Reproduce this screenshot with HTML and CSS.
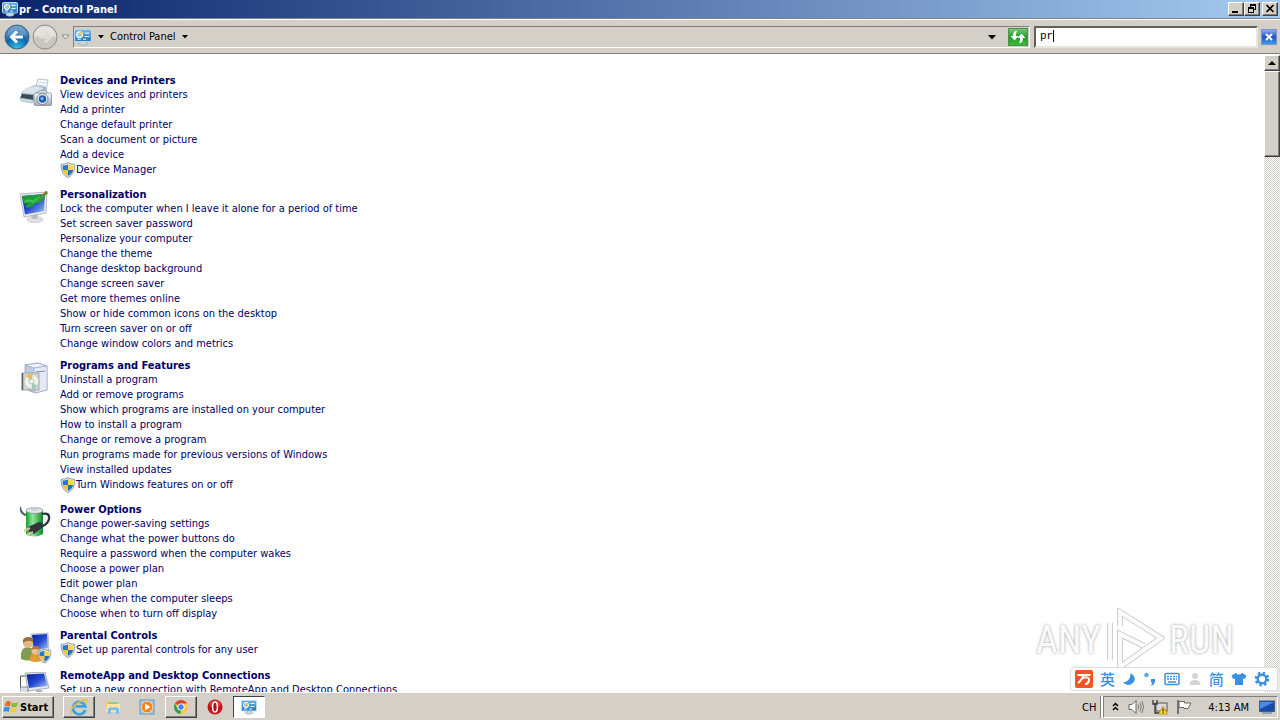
FILE: index.html
```html
<!DOCTYPE html>
<html lang="en">
  <head>
    <meta charset="UTF-8" />
    <meta name="viewport" content="width=device-width, initial-scale=1.0" />
    <title>pr - Control Panel</title>
    <link rel="stylesheet" href="styles.css">
  </head>
  <body>
    <!-- shared icons -->
    <svg class="defs" width="0" height="0">
      <defs>
        <linearGradient id="screen" x1="0" y1="0" x2="1" y2="1">
          <stop offset="0" stop-color="#0a1f9c" /><stop offset=".5" stop-color="#2448cf" /><stop offset="1" stop-color="#a9c8f5" />
        </linearGradient>
        <linearGradient id="cpblue" x1="0" y1="0" x2="0" y2="1">
          <stop offset="0" stop-color="#67b5e6" /><stop offset="1" stop-color="#2277b8" />
        </linearGradient>
        <linearGradient id="silver" x1="0" y1="0" x2="0" y2="1">
          <stop offset="0" stop-color="#f7f8fa" /><stop offset="1" stop-color="#a4abb5" />
        </linearGradient>
        <linearGradient id="battery" x1="0" y1="0" x2="1" y2="0">
          <stop offset="0" stop-color="#1d9a35" /><stop offset=".4" stop-color="#8ee99a" /><stop offset="1" stop-color="#138327" />
        </linearGradient>
        <radialGradient id="orb" cx=".5" cy="1" r="1">
          <stop offset="0" stop-color="#35c5ee" /><stop offset=".5" stop-color="#1266ad" /><stop offset="1" stop-color="#5c92c5" />
        </radialGradient>
      </defs>
      <symbol id="shield" viewBox="0 0 16 16">
        <path d="M8 0.5C6 2 3.500 2.300 1.300 2.200C0.800 8 2.500 13 8 15.600C13.500 13 15.200 8 14.700 2.200C12.500 2.300 10 2 8 0.500Z" fill="#dfe3e8" stroke="#7d8b9b" stroke-width=".8" />
        <path d="M8 2.200C6.500 3.200 4.800 3.600 2.700 3.600L2.700 8H8Z" fill="#2777ce" />
        <path d="M8 2.200C9.500 3.200 11.200 3.600 13.300 3.600L13.300 8H8Z" fill="#fbd743" />
        <path d="M2.800 8H8V14C5 12.500 3.300 10.500 2.800 8Z" fill="#f5c52c" />
        <path d="M13.200 8H8V14C11 12.500 12.700 10.500 13.200 8Z" fill="#256fc6" />
      </symbol>
      <symbol id="panel" viewBox="0 0 16 16">
        <ellipse cx="8" cy="13.500" rx="4" ry="1.800" fill="#cdd4db" stroke="#8f9da8" stroke-width=".5" />
        <rect x=".5" y="1.500" width="15" height="10.500" rx="1" fill="url(#cpblue)" stroke="#b5dcf2" />
        <circle cx="5" cy="6" r="2.600" fill="#8ec9ec" stroke="#fff" />
        <path d="M5 6V3.400A2.600 2.600 0 0 1 7.600 6Z" fill="#f5c451" />
        <path d="M9.500 4.500H13.500M9.500 7.500H13.500M3 10H6M8 10H11" stroke="#e6f5ff" />
      </symbol>
    </svg>

    <header class="titlebar">
      <svg class="icon16"><use href="#panel" /></svg>
      <h1 class="title">pr - Control Panel</h1>
      <div class="winbtns">
        <button class="winbtn" type="button" aria-label="Minimize">
          <svg width="12" height="10"><path d="M2 7H8V9H2Z" /></svg>
        </button>
        <button class="winbtn" type="button" aria-label="Restore">
          <svg width="12" height="10"><path d="M4 0H10V6H8V5H9V2H5V3H4ZM2 3H8V9H2ZM3 5V8H7V5Z" fill-rule="evenodd" /></svg>
        </button>
        <button class="winbtn close" type="button" aria-label="Close">
          <svg width="12" height="10"><path d="M2.500 1L9.500 8M9.500 1L2.500 8" stroke="#000" stroke-width="1.700" /></svg>
        </button>
      </div>
    </header>

    <nav class="navbar">
      <button class="orb" type="button" aria-label="Back">
        <svg width="26" height="26" viewBox="0 0 26 26">
          <circle cx="13" cy="13" r="12" fill="url(#orb)" stroke="#416586" />
          <path d="M3 12A10 10 0 0 1 23 12Q13 9 3 12Z" fill="#fff" opacity=".22" />
          <path d="M19 13H8M13 7.500L7.500 13L13 18.500" fill="none" stroke="#fff" stroke-width="3" />
        </svg>
      </button>
      <button class="orb" type="button" aria-label="Forward">
        <svg width="26" height="26" viewBox="0 0 26 26">
          <circle cx="13" cy="13" r="12" fill="#cac7c1" stroke="#8e8e8e" />
          <path d="M2 13A11 11 0 0 1 24 13Q13 10 2 13Z" fill="#e5e3df" />
          <path d="M7 13H18M13 7.500L18.500 13L13 18.500" fill="none" stroke="#dedbd6" stroke-width="3" />
        </svg>
      </button>
      <button class="recent" type="button" aria-label="Recent pages">
        <svg width="9" height="6"><path d="M1 1H8L4.500 5Z" fill="#f3f3f3" stroke="#888" /></svg>
      </button>
      <div class="address">
        <svg class="icon18"><use href="#panel" /></svg>
        <svg class="arrow" width="6" height="4"><path d="M0 0H6L3 3.500Z" /></svg>
        <a class="crumb" href="#">Control Panel</a>
        <svg class="arrow" width="6" height="4"><path d="M0 0H6L3 3.500Z" /></svg>
        <button class="drop" type="button" aria-label="Previous locations">
          <svg width="8" height="5"><path d="M0 0H8L4 4.500Z" /></svg>
        </button>
        <button class="refresh" type="button" aria-label="Refresh">
          <svg width="18" height="18" viewBox="0 0 18 18">
            <path d="M8 3C5 3 4 5 4 8H1.500L5.500 12.500L9.500 8H7C7 6 7 4.500 8 3ZM10 15C13 15 14 13 14 10H16.500L12.500 5.500L8.500 10H11C11 12 11 13.500 10 15Z" fill="#fff" />
          </svg>
        </button>
      </div>
      <div class="search">
        <input class="searchbox" type="text" value="pr" aria-label="Search Control Panel">
        <span class="caret"></span>
      </div>
      <button class="clear" type="button" aria-label="Clear search">
        <svg width="8" height="8"><path d="M1 1L7 7M7 1L1 7" stroke="#fff" stroke-width="2" /></svg>
      </button>
    </nav>

    <div class="view">
      <main class="results">
        <section class="group">
          <svg class="icon32" viewBox="0 0 32 32">
            <path d="M15 12L18 2L28 3L26 14Z" fill="#f4f8fc" stroke="#9ab" stroke-width=".7" />
            <path d="M19 5L26 6M18 8L25 9" stroke="#cbdcea" />
            <path d="M5 12L15 8L26 10L28 17L14 24L1 20V16Z" fill="#a6b4c2" />
            <path d="M5 12L15 9L24 11L13 17L2 16Z" fill="#dce4eb" />
            <path d="M2 17L13 18V23L0 21Z" fill="#3c4a58" />
            <path d="M0 21L13 23L12 26L1 24Z" fill="#c9dfec" stroke="#899" stroke-width=".5" />
            <rect x="14" y="16" width="17.500" height="12.500" rx="1.500" fill="url(#silver)" stroke="#7a8490" stroke-width=".7" />
            <path d="M18 16L19 13.500H26L27 16Z" fill="#d5dbe1" stroke="#8a949e" stroke-width=".5" />
            <circle cx="22.500" cy="22" r="5.500" fill="#e9eef4" stroke="#667" stroke-width=".7" />
            <circle cx="22.500" cy="22" r="3.800" fill="#245cb4" />
            <circle cx="22" cy="21.500" r="1.500" fill="#7fc1ff" />
          </svg>
          <div class="tasks">
            <h2><a href="#">Devices and Printers</a></h2>
            <ul>
              <li><a href="#">View devices and printers</a></li>
              <li><a href="#">Add a printer</a></li>
              <li><a href="#">Change default printer</a></li>
              <li><a href="#">Scan a document or picture</a></li>
              <li><a href="#">Add a device</a></li>
              <li class="admin"><svg class="icon16"><use href="#shield" /></svg><a href="#">Device Manager</a></li>
            </ul>
          </div>
        </section>

        <section class="group">
          <svg class="icon32" viewBox="0 0 32 32">
            <ellipse cx="15" cy="28.500" rx="8" ry="3" fill="#dfe1e4" stroke="#b5b8bc" stroke-width=".6" />
            <path d="M11 23H18L17 28H12Z" fill="#b9bec5" />
            <path d="M0 3L27 1L26 22L4 26Z" fill="#e8ebee" stroke="#9aa3ad" stroke-width=".7" />
            <path d="M2 5L25 3L24 20L5 23.500Z" fill="url(#screen)" />
            <path d="M2 5L25 3L24.500 8Q20 12 16 12Q14 16 7 17L5 15L9 12L4 13Z" fill="#1f9a3c" />
            <path d="M5 11Q9 8 13 11L20 6" fill="none" stroke="#35c54a" stroke-width="2.500" />
            <path d="M15 11L26 0L28 2L18 12Z" fill="#3a9b38" />
            <path d="M22 5L27 0" stroke="#b76c35" stroke-width="1.500" />
          </svg>
          <div class="tasks">
            <h2><a href="#">Personalization</a></h2>
            <ul>
              <li><a href="#">Lock the computer when I leave it alone for a period of time</a></li>
              <li><a href="#">Set screen saver password</a></li>
              <li><a href="#">Personalize your computer</a></li>
              <li><a href="#">Change the theme</a></li>
              <li><a href="#">Change desktop background</a></li>
              <li><a href="#">Change screen saver</a></li>
              <li><a href="#">Get more themes online</a></li>
              <li><a href="#">Show or hide common icons on the desktop</a></li>
              <li><a href="#">Turn screen saver on or off</a></li>
              <li><a href="#">Change window colors and metrics</a></li>
            </ul>
          </div>
        </section>

        <section class="group">
          <svg class="icon32" viewBox="0 0 32 32">
            <path d="M5 3L18 1L27 4V28L15 31L5 27Z" fill="#c3cbe4" stroke="#8c95b8" stroke-width=".7" />
            <path d="M5 3L18 1L27 4L14 6Z" fill="#edf1fb" stroke="#8c95b8" stroke-width=".6" />
            <path d="M14 6L27 4V28L15 31Z" fill="#e5e9f5" stroke="#9da5c1" stroke-width=".6" />
            <path d="M16 10L25 9" stroke="#7187c7" />
            <rect x="2" y="11" width="17" height="17" fill="#d5d8d3" stroke="#8b9090" stroke-width=".7" />
            <circle cx="11.500" cy="19.500" r="7.500" fill="#edf0e8" stroke="#a4aaa4" stroke-width=".6" />
            <path d="M11.500 19.500L6 14A7.500 7.500 0 0 1 13 12Z" fill="#e3bd67" />
            <path d="M11.500 19.500L17 24A7.500 7.500 0 0 1 12 27Z" fill="#9fc9b5" />
            <circle cx="11.500" cy="19.500" r="2.200" fill="#fff" stroke="#999" stroke-width=".6" />
            <path d="M2.500 11V28" stroke="#5d625e" stroke-width="1.500" />
          </svg>
          <div class="tasks">
            <h2><a href="#">Programs and Features</a></h2>
            <ul>
              <li><a href="#">Uninstall a program</a></li>
              <li><a href="#">Add or remove programs</a></li>
              <li><a href="#">Show which programs are installed on your computer</a></li>
              <li><a href="#">How to install a program</a></li>
              <li><a href="#">Change or remove a program</a></li>
              <li><a href="#">Run programs made for previous versions of Windows</a></li>
              <li><a href="#">View installed updates</a></li>
              <li class="admin"><svg class="icon16"><use href="#shield" /></svg><a href="#">Turn Windows features on or off</a></li>
            </ul>
          </div>
        </section>

        <section class="group">
          <svg class="icon32" viewBox="0 0 32 32">
            <path d="M0 1Q1 8 6 9" fill="none" stroke="#4b5c77" stroke-width="2" />
            <path d="M6 4V28Q14 33 23 28V4Z" fill="url(#battery)" />
            <ellipse cx="14.500" cy="4.500" rx="8.500" ry="3" fill="#dfe4e8" stroke="#7e8d88" stroke-width=".7" />
            <path d="M11 4V1.500Q14.500 0 18 1.500V4Q14.500 5.500 11 4Z" fill="#c4cbd2" />
            <path d="M22 8Q30 6 29 13Q28 18 21 21" fill="none" stroke="#29323c" stroke-width="2.300" />
            <path d="M8 21L19 16Q24 16 23 21L14 28Q8 27 8 21Z" fill="#30363c" />
            <path d="M10 22L4 25M13 26L7 29" stroke="#d8c397" stroke-width="2" />
          </svg>
          <div class="tasks">
            <h2><a href="#">Power Options</a></h2>
            <ul>
              <li><a href="#">Change power-saving settings</a></li>
              <li><a href="#">Change what the power buttons do</a></li>
              <li><a href="#">Require a password when the computer wakes</a></li>
              <li><a href="#">Choose a power plan</a></li>
              <li><a href="#">Edit power plan</a></li>
              <li><a href="#">Change when the computer sleeps</a></li>
              <li><a href="#">Choose when to turn off display</a></li>
            </ul>
          </div>
        </section>

        <section class="group">
          <svg class="icon32" viewBox="0 0 32 32">
            <path d="M11 2L28 1L29 18L13 20Z" fill="#dbe3ec" stroke="#99a" stroke-width=".6" />
            <path d="M12 3L27 2L28 16L14 18Z" fill="url(#screen)" />
            <path d="M1 27Q0 15 8 15Q15 15 15 27Q8 30 1 27Z" fill="#809c54" />
            <circle cx="8" cy="11" r="5" fill="#e4ba83" />
            <path d="M3 11Q2 5 8 5Q14 5 13 10Q8 7 3 11Z" fill="#96703b" />
            <path d="M10 29Q9 21 16 21Q22 21 21 29Q16 31 10 29Z" fill="#e39c31" />
            <circle cx="15.500" cy="18.500" r="4" fill="#edc28e" />
            <path d="M11.500 18Q12 14 15.500 14Q20 14 19.500 18Q15 16 11.500 18Z" fill="#b87a35" />
            <svg x="17" y="16" width="15" height="16"><use href="#shield" /></svg>
          </svg>
          <div class="tasks">
            <h2><a href="#">Parental Controls</a></h2>
            <ul>
              <li class="admin"><svg class="icon16"><use href="#shield" /></svg><a href="#">Set up parental controls for any user</a></li>
            </ul>
          </div>
        </section>

        <section class="group">
          <svg class="icon32" viewBox="0 0 32 32">
            <path d="M.5 4H6M.5 4V16H6" fill="none" stroke="#555" />
            <path d="M5 1L25 0L29 16L8 19Z" fill="#e6eaf0" stroke="#8b93a0" stroke-width=".7" />
            <path d="M6.500 2.500L24 1.500L27.500 14L9 16Z" fill="url(#screen)" />
            <path d="M0 15H8V22H0Z" fill="#d8dde3" stroke="#667" stroke-width=".7" />
            <path d="M16 18H22L23 23H16Z" fill="#aeb4bc" />
          </svg>
          <div class="tasks">
            <h2><a href="#">RemoteApp and Desktop Connections</a></h2>
            <ul>
              <li><a href="#">Set up a new connection with RemoteApp and Desktop Connections</a></li>
            </ul>
          </div>
        </section>
      </main>

      <div class="scrollbar">
        <button class="scroll-up" type="button" aria-label="Scroll up">
          <svg width="8" height="4"><path d="M4 0L8 4H0Z" /></svg>
        </button>
        <div class="thumb"></div>
      </div>
    </div>

    <div class="watermark">
      <span>ANY</span>
      <svg width="60" height="64" viewBox="0 0 60 64">
        <path d="M5 15V52M15 18V4L56 30L15 59V26L39 38" fill="none" stroke="#cfcfcf" stroke-width="6" />
        <path d="M5 15V52M15 18V4L56 30L15 59V26L39 38" fill="none" stroke="#fbfbfb" stroke-width="4" />
      </svg>
      <span>RUN</span>
    </div>

    <!-- input method toolbar -->
    <div class="ime">
      <svg width="18" height="18" viewBox="0 0 18 18">
        <rect width="18" height="18" rx="2" fill="#f2571f" />
        <path d="M2.500 5H15.500M8 5Q8 9 3 13M7 8.500Q13 6 14 9Q14 14 10 14" fill="none" stroke="#fff" stroke-width="2" />
      </svg>
      <span class="han">英</span>
      <svg width="14" height="14" viewBox="0 0 14 14"><path d="M8.500 1Q9 9 1 10.500Q6 15 11 11Q15.500 6 8.500 1Z" fill="#3c8ee0" /></svg>
      <svg width="14" height="14" viewBox="0 0 14 14"><circle cx="3.500" cy="3" r="1.700" fill="#7db5ec" stroke="#3c8ee0" /><path d="M8 7H12V10Q11 13 8 14L9.500 10.500H8Z" fill="#3c8ee0" /></svg>
      <svg width="16" height="14" viewBox="0 0 16 14">
        <rect x="1" y="1.500" width="14" height="11" rx="1" fill="none" stroke="#3c8ee0" stroke-width="1.500" />
        <path d="M3 4.500H13M3 7H13" stroke="#3c8ee0" stroke-width="1.500" stroke-dasharray="2 1" /><path d="M4 10H12" stroke="#3c8ee0" stroke-width="1.500" />
      </svg>
      <svg width="14" height="14" viewBox="0 0 14 14"><circle cx="7" cy="4" r="3" fill="#d5d5d5" /><path d="M1.500 13Q1.500 8 7 8Q12.500 8 12.500 13Z" fill="#d5d5d5" /></svg>
      <span class="han">简</span>
      <svg width="16" height="14" viewBox="0 0 16 14"><path d="M5 1Q8 4 11 1L15.500 3.500L14 7L12 6.500V13H4V6.500L2 7L.5 3.500Z" fill="#3c8ee0" /></svg>
      <svg width="16" height="16" viewBox="0 0 16 16">
        <circle cx="8" cy="8" r="4.300" fill="none" stroke="#3c8ee0" stroke-width="2.400" />
        <circle cx="8" cy="8" r="6.200" fill="none" stroke="#3c8ee0" stroke-width="2.400" stroke-dasharray="2.430 2.430" />
      </svg>
    </div>

    <footer class="taskbar">
      <button class="start" type="button">
        <svg width="16" height="16" viewBox="0 0 16 16">
          <path d="M3 3Q5 1 8 3L7 7.500Q4 6 1.500 7.500Z" fill="#ed6a2a" />
          <path d="M9 3.500Q12 5 15 3L14 7.500Q11 9 8 7.500Z" fill="#83bf3b" />
          <path d="M1.300 8.500Q4 7 6.800 8.500L5.700 13Q3 11.500 .3 13Z" fill="#3a8ede" />
          <path d="M7.800 9Q11 10 13.800 8.500L12.700 13Q10 14.500 6.700 13Z" fill="#fbcb35" />
        </svg>
        Start
      </button>
      <div class="apps">
        <button class="app running" type="button" aria-label="Internet Explorer">
          <svg width="18" height="18" viewBox="0 0 16 16">
            <path d="M13.500 10.500A5.500 5.500 0 1 1 13.500 7.500H5" fill="none" stroke="#3ba4e4" stroke-width="2.500" />
            <path d="M1 14Q-1 10 6 5Q14 0 15 2Q15.500 3 14 5" fill="none" stroke="#efbd33" stroke-width="1.200" />
          </svg>
        </button>
        <button class="app" type="button" aria-label="Explorer">
          <svg width="16" height="16" viewBox="0 0 16 16">
            <path d="M1 2H6L7 4H14V13H1Z" fill="#f0cf68" />
            <path d="M3 3H13V7H3Z" fill="#8bd08d" /><path d="M2 5H15V13H1Z" fill="#f9e6a0" />
            <path d="M3 15V10Q3 8.500 5 8.500H12Q14 8.500 14 10V15H11V11H6V15Z" fill="#79bdeb" />
          </svg>
        </button>
        <button class="app" type="button" aria-label="Media Player">
          <svg width="16" height="16" viewBox="0 0 16 16">
            <rect x="1" y="1" width="14" height="14" fill="#9fcbea" stroke="#5e96c1" />
            <circle cx="8" cy="8" r="5.800" fill="#f58220" stroke="#ffd39b" /><path d="M6 4.500L11.500 8L6 11.500Z" fill="#fff" />
          </svg>
        </button>
        <button class="app running" type="button" aria-label="Chrome">
          <svg width="16" height="16" viewBox="0 0 16 16">
            <circle cx="8" cy="8" r="7" fill="#fbcc33" />
            <path d="M8 8L1.900 4.500A7 7 0 0 1 14.100 4.500H8Z" fill="#df4333" /><path d="M1.900 4.500L5 10L8 11L7.500 15A7 7 0 0 1 1.900 4.500Z" fill="#2ba24c" />
            <circle cx="8" cy="8" r="3.600" fill="#fff" /><circle cx="8" cy="8" r="2.700" fill="#4286f0" />
          </svg>
        </button>
        <button class="app" type="button" aria-label="Opera">
          <svg width="16" height="16" viewBox="0 0 16 16">
            <circle cx="8" cy="8" r="7.500" fill="#c4151c" /><ellipse cx="8" cy="5" rx="5.500" ry="3.500" fill="#ea6b68" opacity=".5" />
            <ellipse cx="8" cy="8" rx="2.400" ry="5" fill="#b01016" stroke="#fff" stroke-width="1.500" />
          </svg>
        </button>
        <button class="app active" type="button" aria-label="Control Panel">
          <svg class="icon16"><use href="#panel" /></svg>
        </button>
      </div>
      <span class="lang">CH</span>
      <div class="tray">
        <svg width="8" height="10"><path d="M1 4L3.500 1.500L6 4M1 8L3.500 5.500L6 8" fill="none" stroke="#000" stroke-width="1.500" /></svg>
        <svg width="16" height="16" viewBox="0 0 16 16">
          <path d="M1 5.500H4L8 1.500V14.500L4 10.500H1Z" fill="#fff" stroke="#666" />
          <path d="M10 5.500Q11.500 8 10 10.500M12 3.500Q14.500 8 12 12.500M14 2Q17 8 14 14" fill="none" stroke="#777" />
        </svg>
        <svg width="16" height="16" viewBox="0 0 16 16">
          <rect x="4" y="4" width="11" height="8" fill="#d8dce0" stroke="#555" />
          <path d="M1 1V5H5V1M3 5V14H8" fill="none" stroke="#333" stroke-width="1.300" />
          <path d="M11 7L15.500 15H6.500Z" fill="#ffd62e" stroke="#a98b0a" stroke-width=".7" /><path d="M11 9.500V12.500M11 13.300V14.300" stroke="#000" />
        </svg>
        <svg width="16" height="16" viewBox="0 0 16 16">
          <path d="M2 1V15" stroke="#555" stroke-width="1.500" /><path d="M3 2.500H8.500V4H15L12 9.500H8V8.500H3Z" fill="#fff" stroke="#666" />
        </svg>
        <time class="clock">4:13 AM</time>
        <svg width="16" height="16" viewBox="0 0 16 16">
          <rect x=".5" y="2" width="15" height="10.500" fill="#174ba5" stroke="#3f5d86" /><path d="M1 3H15L1 10Z" fill="#4a8ce0" /><path d="M3 14H13" stroke="#8ca3ba" stroke-width="2" />
        </svg>
      </div>
    </footer>
  </body>
</html>
```
FILE: styles.css
```css
* {
  box-sizing: border-box;
  margin: 0;
  padding: 0;
}
body {
  display: flex;
  flex-direction: column;
  height: 100vh;
  overflow: hidden;
  background-color: #fff;
  color: #000;
  font-family: Tahoma, "DejaVu Sans Condensed", "Noto Sans", sans-serif;
  font-size: 11px;
}
svg {
  display: block;
  flex: none;
}
button {
  display: flex;
  align-items: center;
  justify-content: center;
  flex: none;
  border: none;
  background: none;
  font: inherit;
}
a {
  color: inherit;
  text-decoration: none;
}
ul {
  list-style: none;
}
.defs {
  position: absolute;
}
.icon16 {
  width: 16px;
  height: 16px;
}
.icon18 {
  width: 18px;
  height: 18px;
}
.icon32 {
  width: 32px;
  height: 32px;
}

/* title bar */
.titlebar {
  display: flex;
  align-items: center;
  gap: 1px;
  flex: none;
  height: 18px;
  padding: 0 2px;
  background: linear-gradient(to right, #0a246a, #a6caf0);
  color: #fff;
}
.title {
  flex: 1;
  font-size: 11px;
}
.winbtns {
  display: flex;
}
.winbtn,
.scroll-up,
.thumb,
.start,
.running {
  background-color: #d4d0c8;
  border: 1px solid;
  border-color: #fff #404040 #404040 #fff;
  box-shadow: inset -1px -1px #808080;
}
.winbtn {
  width: 16px;
  height: 14px;
}
.close {
  margin-left: 2px;
}

/* navigation */
.navbar {
  display: flex;
  align-items: center;
  flex: none;
  height: 36px;
  padding: 2px 3px 0;
  background-color: #d4d0c8;
  border-top: 1px solid #808080;
  border-bottom: 1px solid #808080;
  box-shadow: inset 0 1px #fff;
}
.orb {
  width: 28px;
}
.recent {
  width: 12px;
  margin-right: 2px;
}
.address {
  display: flex;
  align-items: center;
  flex: 1;
  height: 22px;
  border: 1px solid;
  border-color: #808080 #fff #fff #808080;
}
.arrow {
  margin: 0 6px;
}
.crumb {
  line-height: 14px;
}
.drop {
  width: 28px;
  height: 18px;
  margin-left: auto;
}
.refresh {
  width: 20px;
  height: 18px;
  margin: 0 1px 0 2px;
  background: linear-gradient(#7cc681, #1f9b25 50%, #34c033);
  border: 1px solid #4d8e50;
}
.search {
  position: relative;
  width: 224px;
  margin-left: 4px;
}
.searchbox {
  display: block;
  width: 100%;
  height: 22px;
  padding: 0 4px 2px;
  border: 2px solid;
  border-color: #606060 #e8e5df #e8e5df #606060;
  outline: none;
  font-family: "Liberation Mono", monospace;
  font-size: 11px;
}
.caret {
  position: absolute;
  top: 4px;
  left: 19px;
  width: 1px;
  height: 12px;
  background-color: #000;
}
.clear {
  width: 16px;
  height: 16px;
  margin-left: 3px;
  background: linear-gradient(#8faaf0, #2350c8 50%, #35a1e8);
  border: 1px solid #7793ce;
}

/* results */
.view {
  display: flex;
  flex: 1;
  min-height: 0;
  padding-top: 1px;
}
.results {
  display: flex;
  flex-direction: column;
  gap: 7px;
  flex: 1;
  overflow: hidden;
  padding: 18px 20px 0;
  color: #000066;
}
.group {
  display: flex;
  align-items: flex-start;
  gap: 8px;
  flex: none;
}
.group .icon32 {
  margin: 4px 0 -3px;
}
.tasks h2 {
  height: 14px;
  font-size: 11px;
  line-height: 16px;
}
.tasks li {
  line-height: 15px;
}
.tasks .admin {
  display: flex;
  height: 18px;
}
.scrollbar {
  width: 16px;
  background: repeating-conic-gradient(#d4d0c8 0 25%, #fff 0 50%) 0 0 / 2px 2px;
}
.scroll-up {
  width: 16px;
  height: 16px;
}
.thumb {
  height: 86px;
}

/* overlays */
.watermark {
  position: absolute;
  right: 46px;
  bottom: 48px;
  display: flex;
  align-items: center;
  gap: 4px;
  color: #fafafa;
  font-family: "Roboto Condensed", "Roboto", sans-serif;
  font-size: 38px;
  line-height: 48px;
  text-shadow: 0 0 3px #999;
}
.ime {
  position: absolute;
  right: 2px;
  bottom: 29px;
  display: flex;
  align-items: center;
  justify-content: space-between;
  width: 208px;
  height: 24px;
  padding: 0 7px 0 4px;
  background-color: #fff;
  border: 1px solid #ddd;
  border-radius: 3px;
}
.han {
  color: #3c8ee0;
  font-family: "Noto Sans CJK SC", sans-serif;
  font-size: 15px;
  font-weight: 500;
  line-height: 20px;
}

/* taskbar */
.taskbar {
  display: flex;
  align-items: center;
  flex: none;
  height: 28px;
  padding: 2px 2px 0;
  background-color: #d4d0c8;
  box-shadow: inset 0 1px #fff;
}
.start {
  justify-content: flex-start;
  gap: 1px;
  width: 52px;
  height: 22px;
  font-size: 11px;
  font-weight: 700;
}
.apps {
  display: flex;
  flex: 1;
  gap: 2px;
  margin-left: 9px;
}
.app {
  width: 32px;
  height: 22px;
}
.active {
  background-color: #fff;
  border: 1px solid;
  border-color: #404040 #fff #fff #404040;
}
.lang {
  margin-right: 7px;
}
.tray {
  display: flex;
  align-items: center;
  gap: 8px;
  height: 22px;
  padding: 0 2px 0 8px;
  border: 1px solid;
  border-color: #808080 #fff #fff #808080;
  box-shadow: -2px 0 #fff, -3px 0 #808080;
}
.clock {
  margin: 0 2px 0 8px;
}
```
